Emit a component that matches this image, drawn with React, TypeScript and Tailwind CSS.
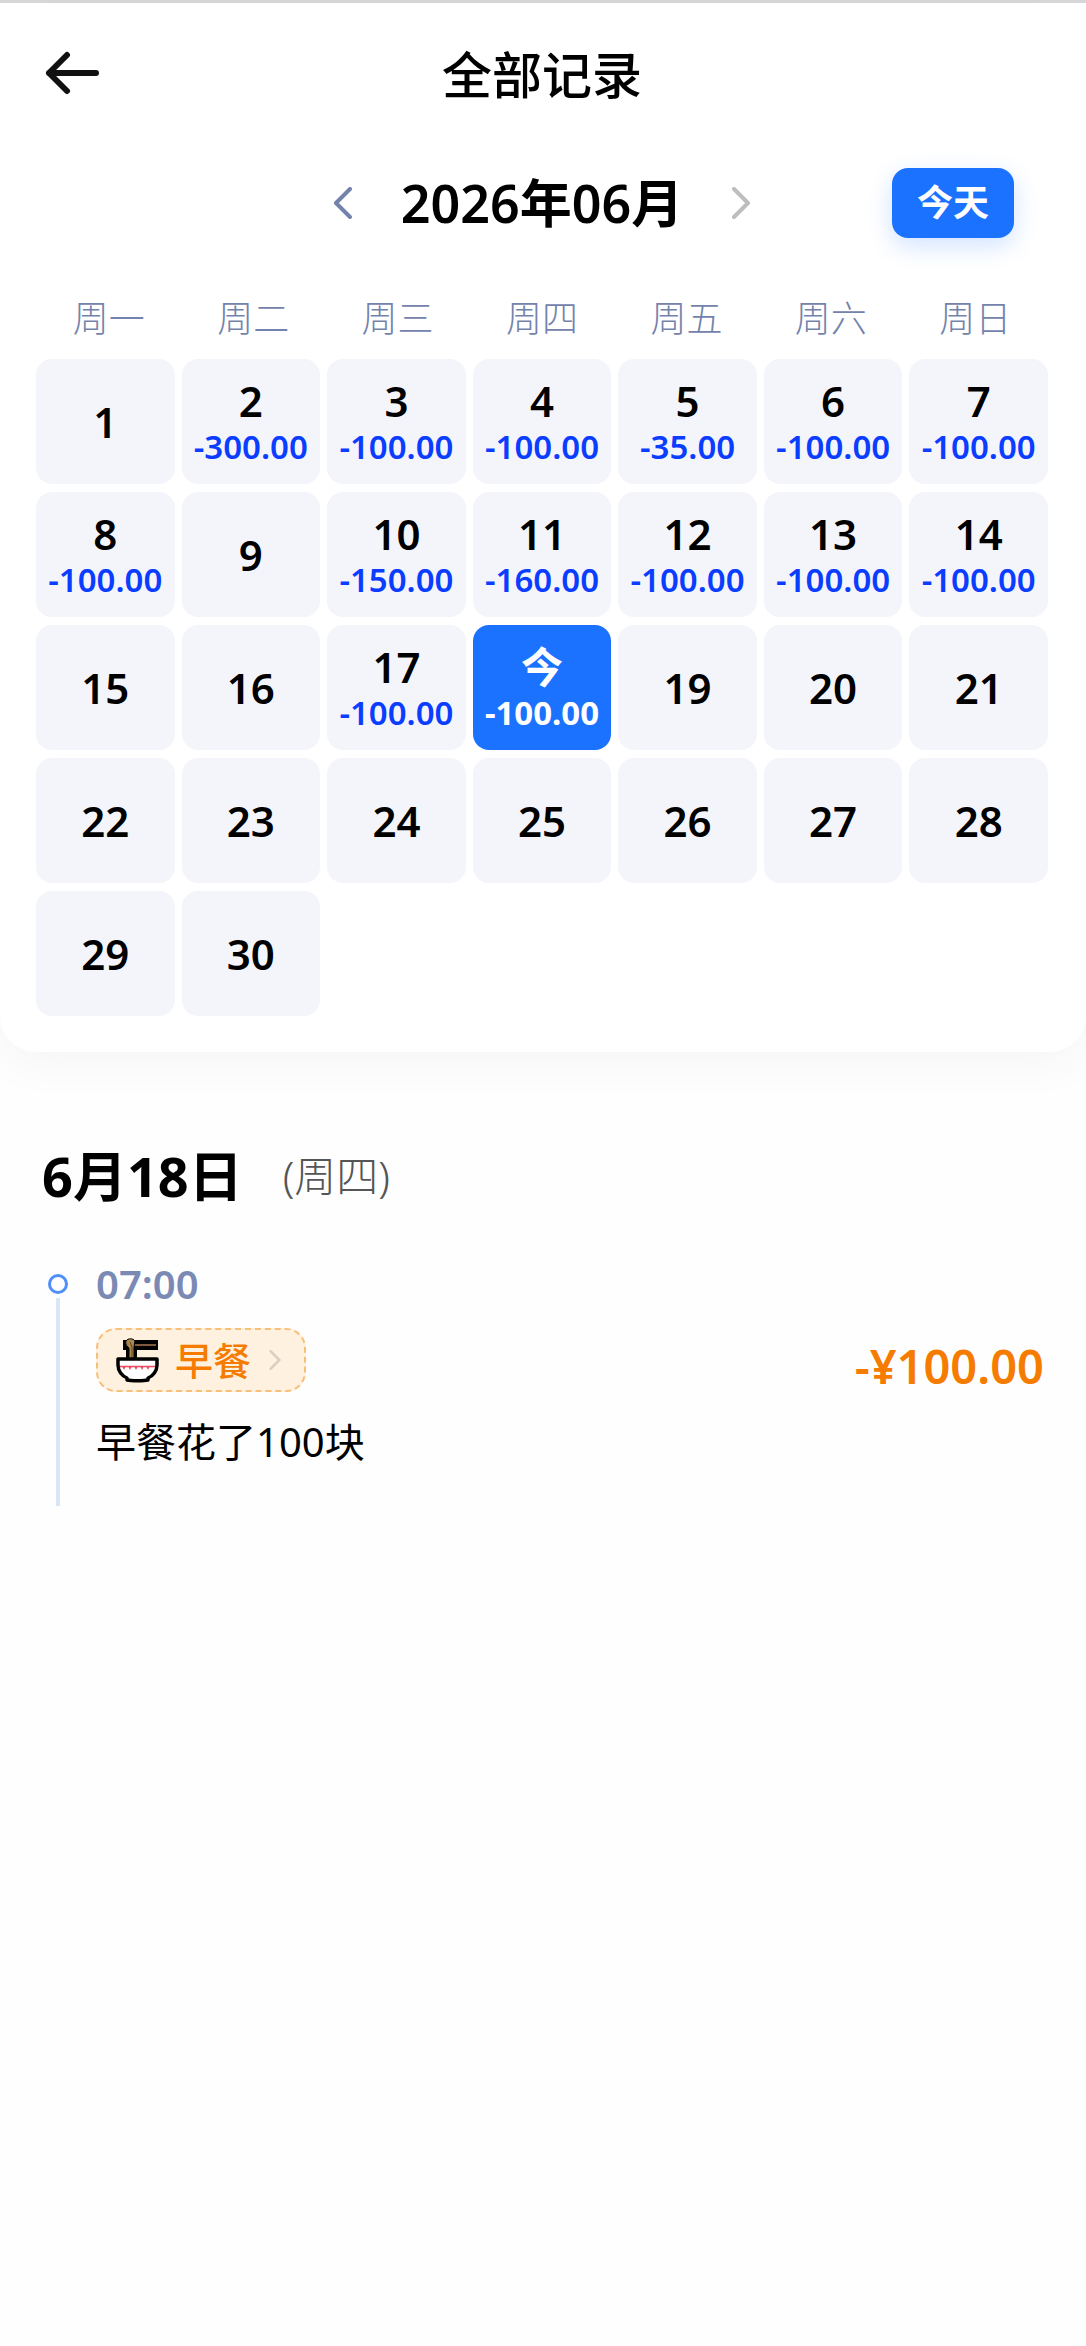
import { useState } from 'react'

const WEEKDAYS = ['周一', '周二', '周三', '周四', '周五', '周六', '周日']

const TODAY = 18

// Daily totals for June 2026, keyed by day of month
const TOTALS: Record<number, string> = {
  2: '-300.00',
  3: '-100.00',
  4: '-100.00',
  5: '-35.00',
  6: '-100.00',
  7: '-100.00',
  8: '-100.00',
  10: '-150.00',
  11: '-160.00',
  12: '-100.00',
  13: '-100.00',
  14: '-100.00',
  17: '-100.00',
  18: '-100.00',
}

const DAYS = Array.from({ length: 30 }, (_, i) => i + 1)

export default function App() {
  const [selected, setSelected] = useState(TODAY)

  return (
    <div className="min-h-screen border-t-3 border-[#d8d8da] bg-[#fefefe] font-['Noto_Sans','Noto_Sans_CJK_SC',sans-serif] text-black">
      <section className="rounded-b-[36px] bg-white pr-[38px] pb-9 pl-9 shadow-[0_12px_48px_rgba(0,0,0,0.04)]">
        <header className="grid h-36 grid-cols-[1fr_auto_1fr] items-center">
          <button aria-label="返回" className="ml-2 w-14 cursor-pointer pb-1">
            <BackArrow />
          </button>
          <h1 className="text-[50px] leading-[60px] font-medium">全部记录</h1>
        </header>

        <div className="grid h-28 grid-cols-[1fr_auto_1fr] items-center">
          <div />
          <div className="flex items-center gap-12">
            <button aria-label="上个月" className="cursor-pointer text-[#7383ab]">
              <Chevron className="h-8 w-5" flip />
            </button>
            <h2 className="text-[52px] leading-[60px] font-semibold">2026年06月</h2>
            <button aria-label="下个月" className="cursor-pointer text-[#bdbdbd]">
              <Chevron className="h-8 w-5" />
            </button>
          </div>
          <button
            onClick={() => setSelected(TODAY)}
            className="mr-[34px] h-[70px] w-[122px] cursor-pointer justify-self-end rounded-2xl bg-[#1a72ff] text-4xl font-semibold text-white shadow-[0_8px_24px_rgba(26,114,255,0.2)]"
          >
            今天
          </button>
        </div>

        <div className="mt-10 grid grid-cols-7 gap-x-[7px] px-1 pb-5 text-center text-4xl leading-10 font-light text-[#7383ab]">
          {WEEKDAYS.map((name) => (
            <span key={name}>{name}</span>
          ))}
        </div>

        <div className="grid grid-cols-7 gap-x-[7px] gap-y-2">
          {DAYS.map((day) => (
            <DayCell key={day} day={day} active={day === selected} onSelect={() => setSelected(day)} />
          ))}
        </div>
      </section>

      <main className="px-[42px] pt-[94px]">
        <h2 className="flex items-center gap-10">
          <span className="text-[54px] leading-[60px] font-bold">6月18日</span>
          <span className="text-[42px] leading-[60px] font-light text-[#555]">(周四)</span>
        </h2>

        <article className="mt-14 flex gap-[22px]">
          <div className="flex w-8 flex-col items-center pt-3">
            <span className="size-5 rounded-full border-3 border-[#4f8ffc]" />
            <span className="mt-1 w-1 flex-1 bg-[#dbe5f8]" />
          </div>

          <div className="flex flex-1 items-center justify-between pb-9">
            <div>
              <time className="block text-[40px] leading-[44px] font-semibold text-[#7a8ab5]">07:00</time>
              <a
                href="#breakfast"
                className="mt-[22px] flex h-16 w-[210px] items-center rounded-[20px] border-2 border-dashed border-[#f8bf78] bg-[#fff1df] pl-[18px] text-[#f57c00]"
              >
                <NoodleBowl />
                <span className="ml-4 text-[38px] leading-[44px] font-medium">早餐</span>
                <Chevron className="ml-4 h-5 w-4 text-[#dccfc0]" />
              </a>
              <p className="mt-[22px] text-[40px] leading-[56px]">早餐花了100块</p>
            </div>
            <span className="text-[47px] leading-[56px] font-semibold text-[#f57c00]">-¥100.00</span>
          </div>
        </article>
      </main>
    </div>
  )
}

function DayCell({ day, active, onSelect }: { day: number; active: boolean; onSelect: () => void }) {
  const total = TOTALS[day]

  return (
    <button
      onClick={onSelect}
      className={`flex h-[125px] cursor-pointer flex-col items-center justify-center rounded-2xl ${
        active ? 'bg-[#1a72ff] text-white' : 'bg-[#f4f5fa]'
      }`}
    >
      <span className="text-[42px] leading-[50px] font-semibold">{day === TODAY ? '今' : day}</span>
      {total && (
        <span className={`text-[33px] leading-[42px] ${active ? 'font-bold' : 'font-semibold text-[#0a3dff]'}`}>
          {total}
        </span>
      )}
    </button>
  )
}

function BackArrow() {
  return (
    <svg viewBox="0 0 56 44" className="h-11 w-14" fill="none" stroke="#111" strokeWidth="6" strokeLinecap="round" strokeLinejoin="round">
      <path d="M52 22H5M23 4 5 22l18 18" />
    </svg>
  )
}

function Chevron({ className, flip = false }: { className: string; flip?: boolean }) {
  return (
    <svg viewBox="0 0 20 32" className={className} fill="none" stroke="currentColor" strokeWidth="4" strokeLinecap="round" strokeLinejoin="round">
      <path d={flip ? 'M17 2 3 16l14 14' : 'M3 2l14 14L3 30'} />
    </svg>
  )
}

function NoodleBowl() {
  return (
    <svg viewBox="0 0 43 45" className="h-[45px] w-[43px]">
      {/* chopsticks */}
      <path d="M7 2h35v10H21v9H10v-9H7z" fill="#000" />
      <path d="M10 7h30" stroke="#a9794f" strokeWidth="1.5" />
      {/* noodles */}
      <path d="M10 3c2-3 7-3 9 0l-1 6v12h-5V10c-2-2-4-4-3-7z" fill="#a88650" stroke="#000" strokeWidth="1" />
      <path d="M14 4l2 5v12" fill="none" stroke="#5d431c" strokeWidth="1" />
      {/* bowl */}
      <path
        d="M2 21h39v6c0 6-4 11-9 13v2c-4 1-17 1-21 0v-2C6 38 2 33 2 27z"
        fill="#fff"
        stroke="#000"
        strokeWidth="3.5"
        strokeLinejoin="round"
      />
      <path d="M4 28.5h35" stroke="#f04a63" strokeWidth="1.5" />
      <path d="M6 28l2 4 2-4M12 28l2 4 2-4M18 28l2 4 2-4M24 28l2 4 2-4M30 28l2 4 2-4" fill="#f04a63" />
    </svg>
  )
}
